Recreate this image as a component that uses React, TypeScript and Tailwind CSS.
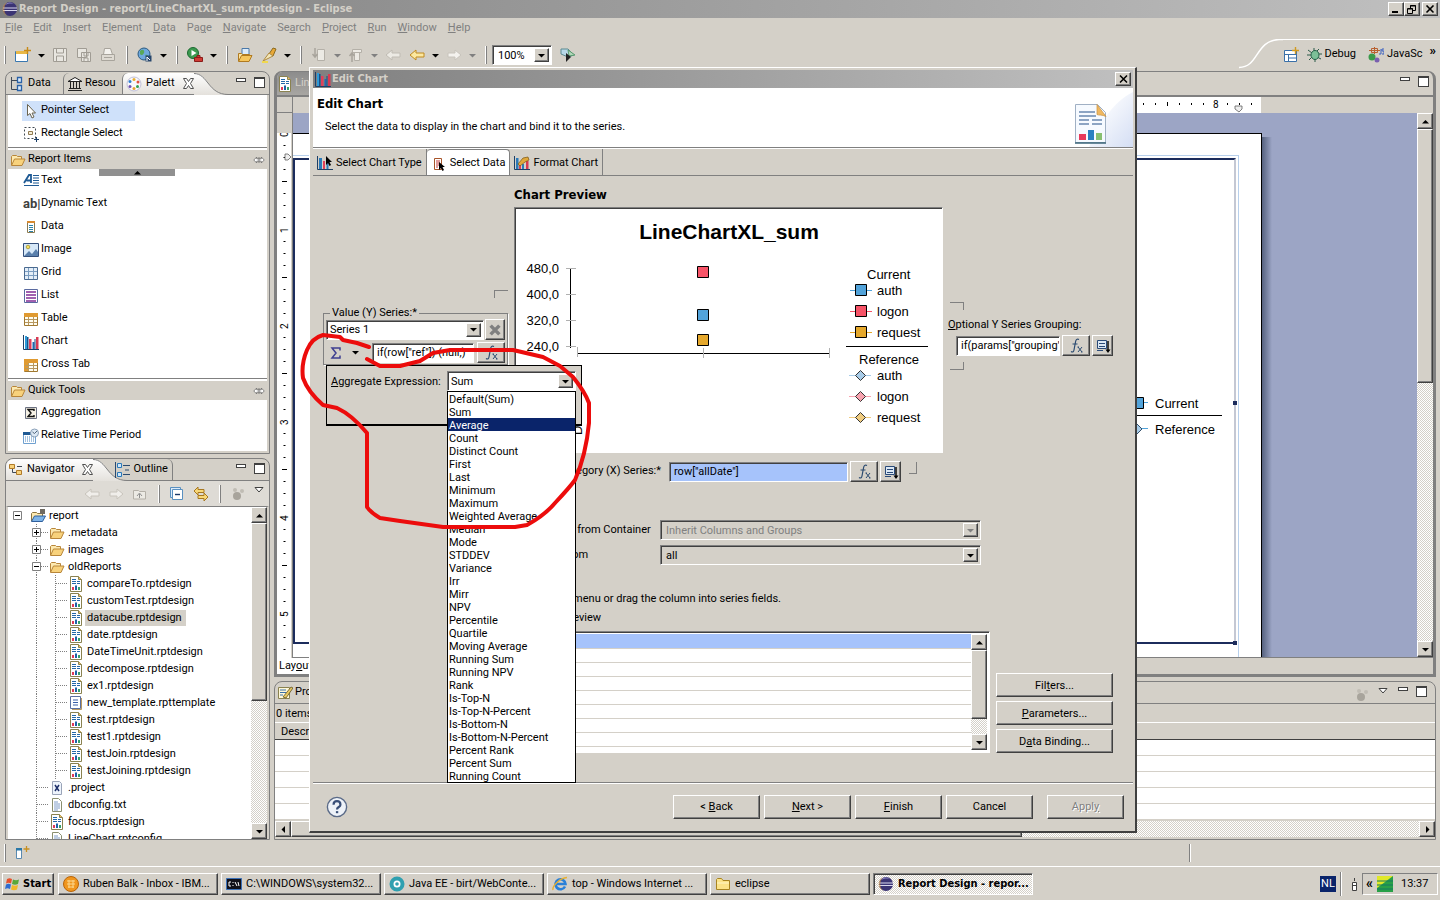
import { ReactNode, useState } from "react";
import clsx from "clsx";

const RAISED =
  "border border-t-white border-l-white border-r-[#404040] border-b-[#404040] shadow-[inset_-1px_-1px_0_#808080]";
const SUNKEN =
  "border border-t-[#808080] border-l-[#808080] border-r-white border-b-white shadow-[inset_1px_1px_0_#404040]";
const CHECKER =
  "bg-[repeating-conic-gradient(#ffffff_0_25%,#d4d0c8_0_50%)] bg-[length:2px_2px]";
const BOLD = "font-['DejaVu_Sans_Condensed','DejaVu_Sans',sans-serif] font-bold";

type IconProps = { children: ReactNode; size?: number; className?: string };

const Icon = ({ children, size = 16, className }: IconProps) => (
  <svg
    width={size}
    height={size}
    viewBox="0 0 16 16"
    fill="none"
    className={clsx("shrink-0", className)}
    aria-hidden="true"
  >
    {children}
  </svg>
);

const EclipseIcon = () => (
  <Icon>
    <circle cx="8" cy="8" r="7" fill="#3b3474" />
    <path d="M3 4a6 6 0 0 1 9-1c-4-1-7 0-9 1z" fill="#8f88c8" />
    <path d="M1 7h14M1 9.5h14" stroke="#d9d7ee" strokeWidth="1.2" />
    <path d="M5 1.5a7 7 0 0 0 0 13 9 9 0 0 1 0-13z" fill="#e0a040" opacity=".5" />
  </Icon>
);

const ChartIcon = () => (
  <Icon>
    <path d="M.5 1v14.500H16" stroke="#1d3f66" />
    <path d="M2 2h2v13H2z" fill="#2d9ad8" />
    <path d="M4 3h1.500v12H4z" fill="#1b4f86" />
    <path d="M6 5h2.500v10H6z" fill="#e0405a" />
    <path d="M9.500 8h2v7h-2z" fill="#1f6ab0" />
    <path d="M11.500 5h1v10h-1z" fill="#1b4f86" />
    <path d="M13 3h2.500v12H13z" fill="#d83a52" />
  </Icon>
);

const ChartTypeIcon = () => (
  <Icon>
    <path d="M.5 1v13.500H16" stroke="#1d3f66" />
    <path d="M2 3h3v11H2z" fill="#2d7ab8" />
    <path d="M6 6h2v8H6z" fill="#e0405a" />
    <path d="M9.500 8h2v6h-2z" fill="#2d7ab8" />
    <path d="M9 1v9l2-2 1.500 3 1.500-1-1.500-3H15z" fill="#000" />
  </Icon>
);

const DataCursorIcon = () => (
  <Icon>
    <path d="M3.500 2.500h7v11h-7z" fill="#fff" stroke="#a8552a" />
    <path d="M5 5h4M5 7h4M5 9h3M5 11h2" stroke="#c23b3b" />
    <path d="M8 6v8l2-2 1.500 3 1.500-1-1.500-3H14z" fill="#000" />
  </Icon>
);

const FormatChartIcon = () => (
  <Icon>
    <path d="M.5 1v13.500H16" stroke="#1d3f66" />
    <path d="M2 3h2.500v11H2z" fill="#2d7ab8" />
    <path d="M5 8h2v6H5z" fill="#e0405a" />
    <path d="M8 9h2v5H8z" fill="#2d7ab8" />
    <path d="M12 6h2.500v8H12z" fill="#d83a52" />
    <path d="M4 9l5-6 5-1 1 3-4 2-5 4z" fill="#e0a83c" stroke="#7a5410" strokeWidth=".7" />
  </Icon>
);

const ReportIcon = () => (
  <Icon>
    <path d="M2.500.5h8l3 3v12h-11z" fill="#fff" stroke="#8a8250" />
    <path d="M10.500.5v3h3" fill="#f0c060" stroke="#8a8250" />
    <path d="M4 3.500h4M4 5.500h4M9 5.500h3M4 7.500h4M9 7.500h3" stroke="#2468a8" />
    <path d="M4 11h2v3H4z" fill="#e03a5a" />
    <path d="M7 9.500h2V14H7z" fill="#1f62a8" />
    <path d="M10 11h2v3h-2z" fill="#35a06a" />
  </Icon>
);

const TemplateIcon = () => (
  <Icon>
    <path d="M2.500 1.500h10v12h-10z" fill="#fff" stroke="#5a6fa0" />
    <path d="M13.500 3v11.500H4" stroke="#b89860" />
    <path d="M5 5h5M5 7.500h5M5 10h5" stroke="#3a5fa8" />
  </Icon>
);

const TextFileIcon = () => (
  <Icon>
    <path d="M3.500 1.500h6l3 3v10h-9z" fill="#fff" stroke="#8a8f70" />
    <path d="M5 5h4M5 7h6M5 9h6M5 11h6M5 13h4" stroke="#7f9cc8" />
  </Icon>
);

const XFileIcon = () => (
  <Icon>
    <path d="M3.500 1.500h7l2 2v11h-9z" fill="#eef4fc" stroke="#9aa4b8" />
    <path d="M6 5l4 6M10 5l-4 6" stroke="#1d2f6a" strokeWidth="1.500" />
  </Icon>
);

const FolderIcon = () => (
  <Icon>
    <path d="M1.500 13V4.500l1-1h4l1 1h4V7" fill="#fde9b0" stroke="#b8863a" />
    <path d="M1.500 13.500l3-6.500h10.500l-3 6.500z" fill="#f8d27c" stroke="#b8863a" />
  </Icon>
);

const ProjectIcon = () => (
  <Icon>
    <path d="M1.500 13V5.500l1-1h4l1 1h5V8" fill="#fde9b0" stroke="#8a7440" />
    <path d="M1.500 13.500l3-5.500h11l-3 5.500z" fill="#7db4e8" stroke="#2f5f9c" />
    <path d="M10 1h5v5h-5z" fill="#6f6a60" />
  </Icon>
);

const PointerIcon = () => (
  <Icon>
    <path d="M4.500 1.500v11l2.500-2 2 4.500 2-1-2-4h3.500z" fill="#fff" stroke="#6a6450" />
  </Icon>
);

const MarqueeIcon = () => (
  <Icon>
    <path d="M1.500 1.500h11v11h-11z" stroke="#404850" strokeDasharray="2 2" />
    <path d="M5.500 5.500h4v3h-4z" fill="#f4eed8" stroke="#907a50" />
    <path d="M13.500 11v5M11 13.500h5" stroke="#1b3f6a" />
  </Icon>
);

const TextIcon = () => (
  <Icon>
    <path d="M1 10L6 2h2v8M3.500 7.500H8" stroke="#1f5a94" strokeWidth="1.800" />
    <path d="M10 2.500h6M10 5h6M10 7.500h6M10 10h6M1 12.500h15" stroke="#1f5a94" />
  </Icon>
);

const DataIcon = () => (
  <Icon>
    <path d="M4.500 2.500h7v11h-7z" fill="#fff" stroke="#8a7a50" />
    <path d="M4 2h8v2H4z" fill="#d88a30" />
    <path d="M6 6.500h4M6 8.500h4M6 10.500h4M6 12.500h4" stroke="#2a80a8" />
  </Icon>
);

const ImageIcon = () => (
  <Icon>
    <path d="M.5 1.500h15v13H.5z" fill="#d6e8f8" stroke="#34507c" />
    <circle cx="5" cy="5" r="1.800" fill="#f8e060" stroke="#9a8a20" strokeWidth=".7" />
    <path d="M1 14l5-5 3 3 4-5 2 3v4z" fill="#5a80ac" />
  </Icon>
);

const GridIcon = () => (
  <Icon>
    <path d="M1.500 2.500h13v12h-13z" fill="#e4eef8" stroke="#4a6a90" />
    <path d="M5.500 3v11M10.500 3v11M2 6.500h12M2 10.500h12" stroke="#7a9cc0" />
  </Icon>
);

const ListIcon = () => (
  <Icon>
    <path d="M1.500 1.500h13v13h-13z" fill="#fff" stroke="#5a6aa0" />
    <path d="M3 4h10M3 7h10M3 10h10M3 13h10" stroke="#a060b0" strokeWidth="2" />
  </Icon>
);

const TableIcon = ({ cross }: { cross?: boolean }) => (
  <Icon>
    <path d="M1.500 2.500h13v12h-13z" fill="#fffdf0" stroke="#a07830" />
    <path d="M1 2h14v4H1z" fill="#e09a30" />
    {cross && <path d="M1 2h4v12H1z" fill="#e09a30" />}
    <path d="M5.500 6v8M10.500 6v8M2 8.500h12M2 11.500h12" stroke="#b89860" />
  </Icon>
);

const SigmaIcon = () => (
  <Icon>
    <path d="M2.500 2.500h11v11h-11z" fill="#f6f2e6" stroke="#6a7080" />
    <path d="M11 6V4.500H5L8 8l-3 3.500h6V10" stroke="#111" strokeWidth="1.400" />
  </Icon>
);

const TimeIcon = () => (
  <Icon>
    <path d="M.5 4.500h12v11H.5z" fill="#fff" stroke="#6fa0d0" />
    <path d="M0 4h10v3H0z" fill="#1f5a94" />
    <path d="M2 9h10M2 11h10M2 13h10" stroke="#4a86c0" strokeDasharray="1 1" />
    <circle cx="11.500" cy="5" r="4" fill="#dce8f4" stroke="#8aa0b8" />
    <path d="M9.500 4l2 1.500L14 3" stroke="#50657a" />
  </Icon>
);

const DataTreeIcon = () => (
  <Icon>
    <path d="M3.500 1v12.500H9M3.500 4.500H9" stroke="#404a58" />
    <path d="M9.500 1.500h4v5h-4zM9.500 9.500h4v5h-4z" fill="#dcebfa" stroke="#2a62a8" strokeWidth="1.300" />
  </Icon>
);

const NavigatorIcon = () => (
  <Icon>
    <path d="M.5 2.500h5v4h-5zM7.500 8.500h5v4h-5z" fill="#f8d27c" stroke="#b07a28" />
    <path d="M3.500 7v3.500H7M8 4.500h5" stroke="#404a58" />
  </Icon>
);

const OutlineIcon = () => (
  <Icon>
    <path d="M2.500 1.500h4v4h-4zM2.500 10.500h4v4h-4z" fill="#cfe6fa" stroke="#2a78b8" />
    <path d="M.5 0v16M8 3.500h7M8 12.500h7M10 8h4" stroke="#2a4a70" />
  </Icon>
);

const LibraryIcon = () => (
  <Icon>
    <path d="M1 5.500L8 1.500l7 4zM1 14.500h14M2 12.500h12" stroke="#222" fill="#fff" />
    <path d="M3.500 6v6M6.500 6v6M9.500 6v6M12.500 6v6" stroke="#222" />
  </Icon>
);

const PaletteIcon = () => (
  <Icon>
    <circle cx="8" cy="8" r="7" fill="#f8f8fc" stroke="#c0c0d8" />
    <circle cx="8" cy="3.500" r="1.500" fill="#e8b030" />
    <circle cx="12" cy="6" r="1.500" fill="#e05040" />
    <circle cx="11.500" cy="10.500" r="1.500" fill="#30a050" />
    <circle cx="8" cy="12.500" r="1.500" fill="#e8a030" />
    <circle cx="4" cy="10.500" r="1.500" fill="#7050b0" />
    <circle cx="4" cy="5.500" r="1.500" fill="#3080d0" />
  </Icon>
);

const CloseTabIcon = () => (
  <svg width="11" height="11" viewBox="0 0 11 11" aria-hidden="true">
    <path
      d="M.5.5h3l2 3 2-3h3l-3 5 3 5h-3l-2-3-2 3h-3l3-5z"
      fill="#fff"
      stroke="#505050"
    />
  </svg>
);

const FocusIcon = () => (
  <Icon>
    <circle cx="7" cy="10" r="4" fill="#a8a49c" />
    <circle cx="5" cy="4" r="2" fill="#c0bcb4" />
    <circle cx="12" cy="5" r="2" fill="#c0bcb4" />
  </Icon>
);

const ViewMenuIcon = () => (
  <svg width="10" height="6" viewBox="0 0 10 6" aria-hidden="true">
    <path d="M1 .5h8L5 5z" fill="#fff" stroke="#404040" />
  </svg>
);

const Triangle = ({ dir = "down", muted }: { dir?: "up" | "down" | "left" | "right"; muted?: boolean }) => {
  const paths = {
    down: "M0 2h7L3.500 5.500z",
    up: "M0 5.500h7L3.500 2z",
    left: "M5 0v7L1.500 3.500z",
    right: "M2 0v7l3.500-3.500z",
  };
  return (
    <svg width="7" height="7" viewBox="0 0 7 7" className="shrink-0" aria-hidden="true">
      <path d={paths[dir]} fill={muted ? "#808080" : "#000"} />
    </svg>
  );
};

const FxGlyph = () => (
  <Icon>
    <path
      d="M11 1.500c-2-1-3 0-3.400 2L6 12c-.4 2-1.500 2.500-3 1.500M4.500 6h5"
      stroke="#2a4a70"
      strokeWidth="1.200"
    />
    <path d="M10 9l4 5M14 9l-4 5M9.500 9h1.500M13 14h1.500" stroke="#2a4a70" />
  </Icon>
);

const GroupGlyph = () => (
  <Icon>
    <path d="M2.500 2.500h9v8h-9z" fill="#dce8f4" stroke="#2a4a78" />
    <path d="M4 5.500h6M4 8.500h6M2 12.500h6" stroke="#2a4a78" />
    <path d="M13 3v9" stroke="#000" strokeWidth="1.400" />
    <path d="M10.500 11.500h5L13 15z" fill="#000" />
  </Icon>
);

const WindowMinMax = () => (
  <div className="ml-auto flex gap-2 pr-1 pt-1">
    <button type="button" aria-label="Minimize view" className="mt-px h-[4px] w-[10px] border border-[#404040] bg-white" />
    <button type="button" aria-label="Maximize view" className="h-[11px] w-[11px] border border-t-2 border-[#404040] bg-white" />
  </div>
);

type ScrollProps = { className?: string; thumb: string };

const VScroll = ({ className, thumb }: ScrollProps) => (
  <div className={clsx("flex w-4 shrink-0 flex-col", CHECKER, className)}>
    <button type="button" aria-label="Scroll up" className={clsx("grid h-4 shrink-0 place-items-center bg-[#d4d0c8]", RAISED)}>
      <Triangle dir="up" />
    </button>
    <div className={clsx("bg-[#d4d0c8]", RAISED, thumb)} />
    <button type="button" aria-label="Scroll down" className={clsx("mt-auto grid h-4 shrink-0 place-items-center bg-[#d4d0c8]", RAISED)}>
      <Triangle />
    </button>
  </div>
);

/* ---------- top of the workbench ---------- */

const TitleBar = () => (
  <header className="flex h-[18px] shrink-0 items-center gap-px bg-linear-to-r from-[#808080] to-[#c0c0c0] px-0.5">
    <EclipseIcon />
    <h1 className={clsx("text-[11px] text-[#d4d0c8]", BOLD)}>
      Report Design - report/LineChartXL_sum.rptdesign - Eclipse
    </h1>
    <div className="ml-auto flex">
      {["Minimize", "Restore", "Close"].map((name) => (
        <button
          key={name}
          type="button"
          aria-label={name}
          className={clsx("grid h-[14px] w-4 place-items-center bg-[#d4d0c8]", RAISED, name === "Close" && "ml-0.5")}
        >
          <svg width="10" height="9" viewBox="0 0 10 9" fill="none" stroke="#000" aria-hidden="true">
            {name === "Minimize" && <path d="M1 7h6" strokeWidth="2" />}
            {name === "Restore" && <path d="M3.500 3V.5h5v5H6M3 1h6M.5 3.500h5v5h-5zM1 4h5" />}
            {name === "Close" && <path d="M1.500.5l7 7M8.500.5l-7 7" strokeWidth="1.600" />}
          </svg>
        </button>
      ))}
    </div>
  </header>
);

const menus: [string, string, string][] = [
  ["", "F", "ile"],
  ["", "E", "dit"],
  ["", "I", "nsert"],
  ["E", "l", "ement"],
  ["", "D", "ata"],
  ["Pa", "g", "e"],
  ["", "N", "avigate"],
  ["Se", "a", "rch"],
  ["", "P", "roject"],
  ["", "R", "un"],
  ["", "W", "indow"],
  ["", "H", "elp"],
];

const MenuBar = () => (
  <nav className="flex h-[21px] shrink-0 items-center gap-[11px] pl-[5px] text-[#808080]">
    {menus.map(([before, key, after]) => (
      <button key={before + key + after} type="button" className="text-[11px]">
        {before}
        <u className="underline">{key}</u>
        {after}
      </button>
    ))}
  </nav>
);

const Separator = () => (
  <span className="grid w-[13px] shrink-0 place-items-center">
    <span className="h-[18px] w-0.5 border-l border-r border-l-white border-r-[#808080]" />
  </span>
);

const ToolButton = ({ label, children }: { label: string; children: ReactNode }) => (
  <button type="button" aria-label={label} className="grid h-6 w-6 shrink-0 place-items-center">
    {children}
  </button>
);

const ToolArrow = ({ muted }: { muted?: boolean }) => (
  <button type="button" aria-label="More" className="grid h-6 w-[13px] shrink-0 place-items-center">
    <Triangle muted={muted} />
  </button>
);

const Arrow = ({ left, fill, stroke }: { left?: boolean; fill: string; stroke: string }) => (
  <Icon>
    <path
      d={left ? "M1 8l6-5v3h8v4H7v3z" : "M15 8L9 3v3H2v4h7v3z"}
      fill={fill}
      stroke={stroke}
      strokeLinejoin="round"
    />
  </Icon>
);

type ComboProps = { id: string; label?: string; value: string; disabled?: boolean; className?: string; children?: ReactNode };

const Combo = ({ id, label, value, disabled, className, children }: ComboProps) => (
  <div className={clsx("relative h-5 p-0.5", SUNKEN, className)}>
    <select
      id={id}
      aria-label={label}
      disabled={disabled}
      className={clsx("block h-full w-full appearance-none bg-transparent pl-px text-[11px] leading-none", disabled && "text-[#808080]")}
    >
      <option>{value}</option>
    </select>
    <span className={clsx("pointer-events-none absolute inset-y-0.5 right-0.5 grid w-[15px] place-items-center bg-[#d4d0c8]", RAISED)}>
      <Triangle muted={disabled} />
    </span>
    {children}
  </div>
);

const MainToolbar = () => (
  <div className="flex items-center">
    <span className="-ml-0.5 flex">
      <Separator />
    </span>
    <ToolButton label="New">
      <Icon>
        <path d="M.5 4.500h12v10H.5z" fill="#fff" stroke="#3a78b0" />
        <path d="M1 4h12v3H1z" fill="#e8b848" />
        <path d="M12.500 0v7M9 3.500h7" stroke="#c88a18" strokeWidth="1.400" />
      </Icon>
    </ToolButton>
    <ToolArrow />
    <ToolButton label="Save">
      <Icon>
        <path d="M1.500 1.500h13v13h-13z" fill="#e8e6e0" stroke="#a09c94" />
        <path d="M4.500 2v4h7V2M4.500 14V9h7v5" stroke="#a09c94" />
      </Icon>
    </ToolButton>
    <ToolButton label="Save All">
      <Icon>
        <path d="M1.500 1.500h9v9h-9zM5.500 5.500h9v9h-9z" fill="#e8e6e0" stroke="#a09c94" />
        <path d="M8 6v3h4V6M8 14v-3h4v3" stroke="#a09c94" />
      </Icon>
    </ToolButton>
    <ToolButton label="Print">
      <Icon>
        <path d="M4.500 1.500h6l2 6h-9z" fill="#f4f2ee" stroke="#a8a49c" />
        <path d="M1.500 7.500h13v6h-13zM4 10.500h8" fill="#dedad2" stroke="#a8a49c" />
      </Icon>
    </ToolButton>
    <Separator />
    <ToolButton label="View Report">
      <Icon>
        <circle cx="7" cy="7" r="6" fill="#6fa8dc" stroke="#2a5a80" />
        <path d="M3 4c3-3 5 0 4 2s-3 3-4 1zM8 8c2-1 4 0 3 3z" fill="#58a858" />
        <path d="M8.500 8.500h6v6h-6z" fill="#27466c" />
        <path d="M10 14v-4l3 3" stroke="#fff" />
      </Icon>
    </ToolButton>
    <ToolArrow />
    <Separator />
    <ToolButton label="Run">
      <Icon>
        <circle cx="6" cy="6" r="5.500" fill="#3c9a50" stroke="#1c6a30" />
        <path d="M4.500 3l5 3-5 3z" fill="#fff" />
        <path d="M7.500 10.500h8v4h-8zM10 10V8.500h3V10" fill="#d03a34" stroke="#8a1c18" />
      </Icon>
    </ToolButton>
    <ToolArrow />
    <Separator />
    <ToolButton label="Open">
      <Icon>
        <path d="M5 1.500h7v6H5z" fill="#dcecfb" stroke="#4a78a8" />
        <path d="M1.500 14V6.500h3l1 1h7v2" fill="#fbe3a0" stroke="#b07a20" />
        <path d="M1.500 14.500l3-6h10.500l-3 6z" fill="#f6c65c" stroke="#b07a20" />
      </Icon>
    </ToolButton>
    <ToolButton label="Highlight">
      <Icon>
        <path d="M8 7l4-6 3 1-3 7z" fill="#e8a838" stroke="#8a6a20" />
        <path d="M2 14l6-8 4 3z" fill="#f2e6b8" stroke="#b08a40" />
        <path d="M1 15h6" stroke="#f0d850" strokeWidth="2" />
      </Icon>
    </ToolButton>
    <ToolArrow />
    <Separator />
    <ToolButton label="Next Annotation">
      <Icon>
        <path d="M6.500 2.500h7v11h-7z" fill="#eceae4" stroke="#b4b0a8" />
        <path d="M4 1v8M1.500 7L4 10l2.500-3" stroke="#a8a49c" strokeWidth="1.500" />
      </Icon>
    </ToolButton>
    <ToolArrow muted />
    <ToolButton label="Previous Annotation">
      <Icon>
        <path d="M4.500 2.500h9v3h-9zM6.500 5.500h5v8h-5z" fill="#eceae4" stroke="#b4b0a8" />
        <path d="M4 15V7M1.500 9L4 6l2.500 3" stroke="#a8a49c" strokeWidth="1.500" />
      </Icon>
    </ToolButton>
    <ToolArrow muted />
    <ToolButton label="Last Edit">
      <Arrow left fill="#eceae4" stroke="#c0bcb4" />
    </ToolButton>
    <ToolButton label="Back">
      <Arrow left fill="#fce8a0" stroke="#c08a20" />
    </ToolButton>
    <ToolArrow />
    <ToolButton label="Forward">
      <Arrow fill="#f4f2ee" stroke="#c8c4bc" />
    </ToolButton>
    <ToolArrow muted />
    <Separator />
    <Combo id="zoom" label="Zoom" value="100%" className="w-[60px] bg-white pl-1" />
    <ToolButton label="Preview">
      <Icon className="ml-2">
        <path d="M1 2h7l6 6-6 2-7-3z" fill="#b8d8e8" stroke="#5a8a90" />
        <path d="M8 3l7 5-6 1z" fill="#b0d8b8" stroke="#5a9a70" />
        <path d="M6 6l5 4-5 5z" fill="#222" />
      </Icon>
    </ToolButton>
  </div>
);

const Perspectives = () => (
  <div className="ml-auto flex h-[30px]">
    <svg width="44" height="30" viewBox="0 0 44 30" fill="none" aria-hidden="true">
      <path d="M0 28.500c20 0 16-27 40-28h4" stroke="#fff" strokeWidth="1.500" />
    </svg>
    <div className="flex items-center gap-2 border-t border-white pr-1 text-[11px]">
      <button type="button" aria-label="Open Perspective">
        <Icon>
          <path d="M1.500 3.500h12v11h-12zM1.500 7.500h12M5.500 7.500v7M5.500 11h8" fill="#fff" stroke="#3a70a8" />
          <path d="M12.500 0v7M9 3.500h7" stroke="#d09a20" strokeWidth="1.400" />
        </Icon>
      </button>
      <button type="button" className="flex items-center gap-0.5">
        <Icon>
          <path d="M1 3l4 3M0 8h4M2 13l3-3M7 1v3M12 2L9 5M15 7h-4M14 12l-4-2M8 15v-3" stroke="#2a5a48" />
          <ellipse cx="8" cy="8" rx="4" ry="4.500" fill="#7cc098" stroke="#246048" />
        </Icon>
        Debug
      </button>
      <button type="button" className="ml-1 flex items-center gap-[3px]">
        <Icon>
          <path d="M3.500 1.500h6v4h-6zM1 3.500h11M6.500 0v7" stroke="#b86030" />
          <circle cx="4" cy="10" r="3.500" fill="#3a9a4a" />
          <circle cx="9" cy="13" r="2.500" fill="#7a60b0" />
          <path d="M13 2v5h-2M16 2h-2v2h2v3h-2" stroke="#3a60c0" />
        </Icon>
        JavaSc
      </button>
      <button type="button" aria-label="More perspectives" className="-ml-px pb-2 text-[13px] font-bold">
        »
      </button>
    </div>
  </div>
);

/* ---------- left column ---------- */

const TabCurve = () => (
  <svg width="34" height="22" viewBox="0 0 34 22" aria-hidden="true" className="shrink-0">
    <defs>
      <linearGradient id="tab-fade" x1="0" y1="0" x2="0" y2="1">
        <stop offset="0" stopColor="#ffffff" />
        <stop offset="1" stopColor="#e4e1dc" />
      </linearGradient>
    </defs>
    <path d="M0 0C14 0 14 21 34 21.500V22H0z" fill="url(#tab-fade)" />
    <path d="M0 .5C14 .5 14 21.500 34 21.500" fill="none" stroke="#808080" />
  </svg>
);

const reportItems: [string, ReactNode][] = [
  ["Text", <TextIcon />],
  ["Dynamic Text", <span className="text-[13px] font-bold text-[#404040]">ab|</span>],
  ["Data", <DataIcon />],
  ["Image", <ImageIcon />],
  ["Grid", <GridIcon />],
  ["List", <ListIcon />],
  ["Table", <TableIcon />],
  ["Chart", <ChartIcon />],
  ["Cross Tab", <TableIcon cross />],
];

const Drawer = ({ title, children }: { title: string; children: ReactNode }) => (
  <section className="border-t border-[#808080] pt-0.5">
    <h2 className="flex h-[19px] items-center gap-0.5 bg-[#d4d0c8] px-0.5 text-[11px]">
      <FolderIcon />
      {title}
      <Icon size={12} className="ml-auto">
        <path d="M1 8l4-4v2.500h6V4l4 4-4 4V9.500H5V12zM8 4v8" fill="#fff" stroke="#606060" />
      </Icon>
    </h2>
    {children}
  </section>
);

const PaletteItem = ({ label, icon, active }: { label: string; icon: ReactNode; active?: boolean }) => (
  <li className="flex h-[23px] items-center pl-[14px]">
    <button
      type="button"
      className={clsx(
        "flex h-5 min-w-[113px] items-center gap-0.5 pl-px text-left text-[11px] whitespace-nowrap",
        active && "bg-[#cfe1fa]",
      )}
    >
      <span className="grid w-4 shrink-0 place-items-center">{icon}</span>
      {label}
    </button>
  </li>
);

const PaletteView = () => (
  <section className="flex h-[383px] shrink-0 flex-col rounded-t-lg border border-[#808080]">
    <div className="flex h-[23px] shrink-0 border-b border-[#808080] pt-px text-[11px]">
      <button type="button" className="flex w-[57px] items-center gap-1 pl-0.5">
        <DataTreeIcon />
        Data
      </button>
      <button type="button" className="flex w-[59px] items-center gap-0.5 rounded-tl-md border-l border-[#808080] pl-[3px]">
        <LibraryIcon />
        Resou
      </button>
      <button type="button" className="flex items-center gap-1 rounded-tl-md border-l border-[#808080] bg-linear-to-b from-white to-[#e4e1dc] pl-[3px]">
        <PaletteIcon />
        Palett
        <span className="ml-1">
          <CloseTabIcon />
        </span>
      </button>
      <TabCurve />
      <WindowMinMax />
    </div>
    <div className="flex-1 overflow-hidden border-2 border-t-0 border-[#d4d0c8] bg-white pt-1">
      <ul className="pb-0.5">
        <PaletteItem label="Pointer Select" icon={<PointerIcon />} active />
        <PaletteItem label="Rectangle Select" icon={<MarqueeIcon />} />
      </ul>
      <Drawer title="Report Items">
        <ul className="relative pb-0.5">
          {reportItems.map(([label, icon]) => (
            <PaletteItem key={label} label={label} icon={icon} />
          ))}
          <li className="absolute left-[91px] top-0 grid h-[7px] w-[76px] place-items-center bg-[#909090]">
            <Triangle dir="up" />
          </li>
        </ul>
      </Drawer>
      <Drawer title="Quick Tools">
        <ul className="pt-px">
          <PaletteItem label="Aggregation" icon={<SigmaIcon />} />
          <PaletteItem label="Relative Time Period" icon={<TimeIcon />} />
        </ul>
      </Drawer>
    </div>
  </section>
);

type Node = { name: string; depth: number; icon: ReactNode; toggle?: "+" | "-"; selected?: boolean };

const rpt = (name: string, depth = 2, selected = false): Node => ({ name, depth, icon: <ReportIcon />, selected });

const nodes: Node[] = [
  { name: "report", depth: 0, icon: <ProjectIcon />, toggle: "-" },
  { name: ".metadata", depth: 1, icon: <FolderIcon />, toggle: "+" },
  { name: "images", depth: 1, icon: <FolderIcon />, toggle: "+" },
  { name: "oldReports", depth: 1, icon: <FolderIcon />, toggle: "-" },
  rpt("compareTo.rptdesign"),
  rpt("customTest.rptdesign"),
  rpt("datacube.rptdesign", 2, true),
  rpt("date.rptdesign"),
  rpt("DateTimeUnit.rptdesign"),
  rpt("decompose.rptdesign"),
  rpt("ex1.rptdesign"),
  { name: "new_template.rpttemplate", depth: 2, icon: <TemplateIcon /> },
  rpt("test.rptdesign"),
  rpt("test1.rptdesign"),
  rpt("testJoin.rptdesign"),
  rpt("testJoining.rptdesign"),
  { name: ".project", depth: 1, icon: <XFileIcon /> },
  { name: "dbconfig.txt", depth: 1, icon: <TextFileIcon /> },
  rpt("focus.rptdesign", 1),
  { name: "LineChart.rptconfig", depth: 1, icon: <TextFileIcon /> },
];

const TreeRow = ({ node }: { node: Node }) => (
  <li className="flex h-[17px] items-center text-[11px] whitespace-nowrap">
    {node.depth > 0 && <span className="w-[19px] shrink-0" />}
    {node.depth > 1 && (
      <span className="flex h-full w-[19px] shrink-0 justify-center">
        <span className="h-full border-l border-dotted border-[#808080]" />
      </span>
    )}
    <span className="relative flex h-full w-[22px] shrink-0 items-center pl-[5px]">
      {node.depth > 0 && (
        <>
          <span className="absolute inset-y-0 left-[9px] border-l border-dotted border-[#808080]" />
          <span className="absolute left-[9px] top-2 w-3 border-t border-dotted border-[#808080]" />
        </>
      )}
      {node.toggle && (
        <button type="button" aria-label={node.toggle === "+" ? "Expand" : "Collapse"} className="relative">
          <svg width="9" height="9" viewBox="0 0 9 9" className="block" aria-hidden="true">
            <path d="M.5.5h8v8h-8z" fill="#fff" stroke="#808080" />
            <path d={node.toggle === "+" ? "M2 4.500h5M4.500 2v5" : "M2 4.500h5"} stroke="#000" />
          </svg>
        </button>
      )}
    </span>
    {node.icon}
    <span className={clsx("ml-px px-0.5 leading-[16px]", node.selected && "bg-[#d4d0c8] pr-1")}>
      {node.name}
    </span>
  </li>
);

const NavigatorView = () => (
  <section className="mt-1 flex min-h-0 flex-1 flex-col rounded-t-lg border border-[#808080]">
    <div className="flex h-[22px] shrink-0 border-b border-[#808080] text-[11px]">
      <button type="button" className="flex items-center gap-0.5 rounded-tl-lg bg-linear-to-b from-white to-[#e4e1dc] pl-[3px]">
        <NavigatorIcon />
        Navigator
        <span className="ml-1.5">
          <CloseTabIcon />
        </span>
      </button>
      <div className="-mr-3">
        <TabCurve />
      </div>
      <button type="button" className="flex items-center gap-0.5 rounded-tr-md border-r border-[#808080] pr-1">
        <OutlineIcon />
        Outline
      </button>
      <WindowMinMax />
    </div>
    <div className="flex h-[25px] shrink-0 items-center justify-end bg-[#dedbd5] pr-px">
      <ToolButton label="Go back">
        <Arrow left fill="#f0eeea" stroke="#c8c4bc" />
      </ToolButton>
      <ToolButton label="Go forward">
        <Arrow fill="#f0eeea" stroke="#c8c4bc" />
      </ToolButton>
      <ToolButton label="Up">
        <Icon>
          <path d="M1.500 13V4.500h5l1 1h6V13z" fill="#eceae4" stroke="#b4b0a8" />
          <path d="M7.500 12V8M5 10l2.500-3L10 10" stroke="#909090" />
        </Icon>
      </ToolButton>
      <Separator />
      <ToolButton label="Collapse All">
        <Icon>
          <path d="M1.500 1.500h10v10h-10z" fill="#dcebfa" stroke="#5a90c0" />
          <path d="M3.500 3.500h10v10h-10z" fill="#fff" stroke="#5a90c0" />
          <path d="M6 8.500h5" stroke="#1a3a6a" strokeWidth="1.400" />
        </Icon>
      </ToolButton>
      <ToolButton label="Link with Editor">
        <Icon>
          <path d="M1 5l4-4v2.500h6v3H5V9z" fill="#f8d878" stroke="#a87820" />
          <path d="M15 11l-4-4v2.500H5v3h6V15z" fill="#f8d878" stroke="#a87820" />
        </Icon>
      </ToolButton>
      <Separator />
      <ToolButton label="Focus">
        <FocusIcon />
      </ToolButton>
      <button type="button" aria-label="View Menu" className="mx-1 mb-2">
        <ViewMenuIcon />
      </button>
    </div>
    <div className="flex min-h-0 flex-1 border-x-2 border-t border-x-[#d4d0c8] border-t-[#808080] bg-white">
      <ul className="min-h-0 flex-1 overflow-hidden">
        {nodes.map((n) => (
          <TreeRow key={n.name} node={n} />
        ))}
      </ul>
      <VScroll thumb="h-[178px]" />
    </div>
  </section>
);

/* ---------- editor and problems ---------- */

const VerticalRuler = () => (
  <svg width="14" height="544" viewBox="0 0 14 544" className="mt-5 shrink-0 bg-white" aria-hidden="true">
    {Array.from({ length: 44 }, (_, i) => (
      <path
        key={i}
        d={i % 8 === 4 ? "M5 0h5" : "M6.500 0h2"}
        transform={`translate(0 ${i * 12 + 0.5})`}
        stroke="#000"
        className={i % 8 === 0 ? "hidden" : undefined}
      />
    ))}
    {[0, 1, 2, 3, 4, 5].map((n) => (
      <text
        key={n}
        transform={`translate(11 ${n * 96 + 4}) rotate(-90)`}
        className="fill-black text-[10px]"
      >
        {n}
      </text>
    ))}
    <path d="M8 21h3l3 3-3 3H8z" fill="#eee" stroke="#606060" strokeWidth=".8" />
  </svg>
);

const HorizontalRuler = () => (
  <svg width="125" height="16" viewBox="0 0 125 16" className="bg-white" aria-hidden="true">
    {Array.from({ length: 10 }, (_, i) => (
      <path
        key={i}
        d={i === 2 ? "M0 5v4" : "M0 6v2"}
        transform={`translate(${i * 12 + 7.5} 0)`}
        stroke="#000"
        className={i === 6 ? "hidden" : undefined}
      />
    ))}
    <text x="77" y="11" className="fill-black text-[10px]">
      8
    </text>
    <path d="M99 9h7v3l-3 3-4-3z" fill="#eee" stroke="#606060" strokeWidth=".8" />
  </svg>
);

const Editor = () => (
  <section className="flex min-h-0 flex-1 flex-col overflow-hidden rounded-t-lg border-b-[3px] border-l-[3px] border-r-[3px] border-t border-[#808080]">
    <div className="flex h-[23px] shrink-0">
      <div className="flex w-28 items-center gap-0.5 bg-linear-to-b from-[#8c8c8c] to-[#a8a6a2] text-[11px] text-[#d4d0c8]">
        <ReportIcon />
        LineChartXL_sum
      </div>
      <WindowMinMax />
    </div>
    <div className="h-[2px] shrink-0 bg-[#808080]" />
    <div className="flex min-h-0 flex-1">
      <div className="flex w-4 shrink-0 flex-col overflow-hidden border-r border-[#808080]">
        <div className="h-4 shrink-0 border-b border-[#808080]" />
        <VerticalRuler />
      </div>
      <div className="flex min-w-0 flex-1 flex-col">
        <div className="flex h-4 shrink-0 justify-end pr-[172px]">
          <HorizontalRuler />
        </div>
        <div className="flex min-h-0 flex-1 border-b border-[#808080]">
          <div className="flex flex-1 bg-[#9ca5c5] pr-[145px] pt-5">
            <div className="flex flex-1 border-r border-t border-black bg-white pr-[22px] pt-[21px]">
              <div className="flex-1 border-r border-t border-[#b8d0ec] pb-[13px] pr-0.5 pt-0.5">
                <div className="relative flex h-full items-center justify-end border-2 border-[#1c2c5c] border-r-[#c4c8d4]">
                  <svg width="110" height="60" viewBox="0 0 110 60" className="mt-9 font-['Liberation_Sans',Arial,sans-serif] text-[13px]">
                    <path d="M0 13.500h24M0 39.500h24" stroke="#52a3da" />
                    <path d="M8.500 8.500h11v11h-11z" fill="#52a3da" stroke="#000" />
                    <path d="M12 34l6 6-6 6-6-6z" fill="#a8cce8" stroke="#34506c" />
                    <path d="M0 26.500h98" stroke="#000" />
                    <text x="31" y="19">Current</text>
                    <text x="31" y="45">Reference</text>
                  </svg>
                  <span className="absolute -right-[3px] top-1/2 h-1 w-1 bg-[#1c2c5c]" />
                  <span className="absolute -bottom-[3px] -right-[3px] h-1 w-1 bg-[#1c2c5c]" />
                </div>
              </div>
            </div>
            <div className="mt-1 w-[10px] bg-linear-to-r from-[#56627f] to-[#9ca5c5]" />
          </div>
          <VScroll thumb="h-[254px]" />
        </div>
      </div>
    </div>
    <div className="flex h-4 shrink-0 text-[11px]">
      <button type="button" className="flex w-16 items-center bg-white pl-0.5">
        Lay<u>o</u>ut
      </button>
    </div>
  </section>
);

const Problems = () => (
  <section className="mt-1 flex h-[159px] shrink-0 flex-col rounded-t-lg border border-[#808080]">
    <div className="flex h-[22px] shrink-0 items-center gap-0.5 border-b border-[#808080] pl-0.5 text-[11px]">
      <Icon>
        <path d="M1.500 2.500h11v11h-11z" fill="#fff8d8" stroke="#8a8250" />
        <path d="M3 5h6M3 7.500h6M3 10h3" stroke="#3a70a8" />
        <path d="M6 12l8-10 2 1-7 10z" fill="#e8c860" stroke="#605020" strokeWidth=".8" />
      </Icon>
      Problems
      <span className="ml-auto flex items-center gap-2 pt-1">
        <FocusIcon />
        <span className="mb-2">
          <ViewMenuIcon />
        </span>
      </span>
      <div className="ml-2 flex h-full pr-1">
        <WindowMinMax />
      </div>
    </div>
    <p className="h-[18px] shrink-0 pl-px text-[11px] leading-[19px]">0 items</p>
    <table className="w-full border-collapse bg-white text-left text-[11px]">
      <thead>
        <tr className="h-[17px] border-b border-t border-b-[#404040] border-t-white bg-[#d4d0c8]">
          <th className="pl-1.5 font-normal leading-none">Description</th>
        </tr>
      </thead>
      <tbody>
        {[0, 1, 2, 3, 4].map((r) => (
          <tr key={r} className="h-4 border-b border-[#d4d0c8]">
            <td />
          </tr>
        ))}
      </tbody>
    </table>
    <div className={clsx("mb-0.5 mt-auto flex h-4 shrink-0", CHECKER)}>
      <button type="button" aria-label="Scroll left" className={clsx("grid w-4 place-items-center bg-[#d4d0c8]", RAISED)}>
        <Triangle dir="left" />
      </button>
      <div className={clsx("w-[63%] bg-[#d4d0c8]", RAISED)} />
      <button type="button" aria-label="Scroll right" className={clsx("ml-auto grid w-4 place-items-center bg-[#d4d0c8]", RAISED)}>
        <Triangle dir="right" />
      </button>
    </div>
  </section>
);

/* ---------- chart dialog ---------- */

const Field = ({ id, label, value, className }: { id: string; label?: string; value: string; className: string }) => (
  <input
    id={id}
    aria-label={label}
    defaultValue={value}
    className={clsx("h-5 min-w-0 pl-1 text-[11px] outline-none", SUNKEN, className)}
  />
);

const FxButton = ({ className }: { className?: string }) => (
  <button type="button" aria-label="Edit expression" className={clsx("grid h-[21px] w-7 shrink-0 place-items-center bg-[#d4d0c8]", RAISED, className)}>
    <FxGlyph />
  </button>
);

const GroupButton = () => (
  <button type="button" aria-label="Edit grouping" className={clsx("grid h-[21px] w-[21px] shrink-0 place-items-center bg-[#d4d0c8]", RAISED)}>
    <GroupGlyph />
  </button>
);

const functions = [
  "Default(Sum)", "Sum", "Average", "Count", "Distinct Count", "First", "Last",
  "Minimum", "Maximum", "Weighted Average", "Median", "Mode", "STDDEV", "Variance",
  "Irr", "Mirr", "NPV", "Percentile", "Quartile", "Moving Average", "Running Sum",
  "Running NPV", "Rank", "Is-Top-N", "Is-Top-N-Percent", "Is-Bottom-N",
  "Is-Bottom-N-Percent", "Percent Rank", "Percent Sum", "Running Count",
];

const AggregatePopup = () => {
  const [active, setActive] = useState("Average");
  return (
    <div className="absolute left-[3px] top-full z-20 flex h-[61px] w-[256px] items-start border border-b-2 border-black bg-[#d4d0c8] pl-1 pt-[5px]">
      <label htmlFor="aggregate" className="w-[116px] text-[11px] leading-[21px] whitespace-nowrap">
        <u>A</u>ggregate Expression:
      </label>
      <Combo id="aggregate" value="Sum" className="w-[129px] bg-white">
        <ul role="listbox" aria-label="Aggregate functions" className="absolute -left-px top-[19px] w-[129px] border border-black bg-white">
          {functions.map((f) => (
            <li
              key={f}
              role="option"
              aria-selected={f === active}
              onMouseEnter={() => setActive(f)}
              className={clsx("h-[13px] pl-px text-[11px] leading-[15px]", f === active && "bg-[#0a246a] text-white")}
            >
              {f}
            </li>
          ))}
        </ul>
      </Combo>
    </div>
  );
};

const series = [
  { name: "auth", color: "#52a3da", soft: "#a8cce8", y: 82 },
  { name: "logon", color: "#f75468", soft: "#f8a4b0", y: 103 },
  { name: "request", color: "#e5a82c", soft: "#f0cc80", y: 124 },
];

const ChartPreview = () => (
  <svg
    viewBox="0 0 426 243"
    className="h-[243px] w-full font-['Liberation_Sans',Arial,sans-serif] text-[13px]"
    role="img"
    aria-label="LineChartXL_sum"
  >
    <text x="213" y="30" textAnchor="middle" className="text-[21px] font-bold">
      LineChartXL_sum
    </text>
    <path d="M54.500 60v79" stroke="#000" />
    {["480,0", "400,0", "320,0", "240,0"].map((t, i) => (
      <g key={t}>
        <text x="43" y={64 + i * 26} textAnchor="end">{t}</text>
        <path d={`M50 ${59.5 + i * 26}h10`} stroke="#b0b0b0" />
      </g>
    ))}
    <path d="M61 144.500h253" stroke="#000" />
    <path d="M61.500 138v10M187.500 139v10M313.500 139v10" stroke="#b0b0b0" />
    <path d="M181.500 57.500h11v11h-11z" fill="#f75468" stroke="#000" />
    <path d="M181.500 100.500h11v11h-11z" fill="#52a3da" stroke="#000" />
    <path d="M181.500 125.500h11v11h-11z" fill="#e5a82c" stroke="#000" />
    <text x="351" y="70">Current</text>
    <text x="343" y="155">Reference</text>
    <path d="M330 137.500h82" stroke="#000" />
    {series.map((s) => (
      <g key={s.name}>
        <path d={`M334 ${s.y - 0.5}h22`} stroke={s.color} />
        <path d={`M339.500 ${s.y - 6.5}h11v11h-11z`} fill={s.color} stroke="#000" />
        <text x="361" y={s.y + 4}>{s.name}</text>
        <path d={`M333 ${s.y + 84.5}h22`} stroke={s.soft} />
        <path d={`M344.500 ${s.y + 79.5}l5 5-5 5-5-5z`} fill={s.soft} stroke="#333" />
        <text x="361" y={s.y + 89}>{s.name}</text>
      </g>
    ))}
    <text transform="translate(66 226) rotate(-90)">D</text>
  </svg>
);

const DialogTab = ({ icon, label, active }: { icon: ReactNode; label: string; active?: boolean }) => (
  <button
    type="button"
    role="tab"
    aria-selected={!!active}
    className={clsx(
      "flex h-full items-center gap-[3px] border-r border-[#808080] px-1 pt-0.5 text-[11px] whitespace-nowrap",
      active && "rounded-t-sm border-t bg-white",
    )}
  >
    {icon}
    {label}
  </button>
);

const ActionButton = ({ children, className, disabled }: { children: ReactNode; className: string; disabled?: boolean }) => (
  <button
    type="button"
    disabled={disabled}
    className={clsx("h-6 text-[11px] leading-none", RAISED, className, disabled && "text-[#808080] [text-shadow:1px_1px_0_#fff]")}
  >
    {children}
  </button>
);

const EditChartDialog = () => (
  <div
    role="dialog"
    aria-label="Edit Chart"
    className="absolute bottom-[67px] left-[309px] right-[303px] top-[67px] z-10 flex flex-col border border-b-2 border-r-2 border-b-[#404040] border-l-white border-r-[#404040] border-t-white bg-[#d4d0c8] pb-px pl-[3px] pr-0.5 pt-0.5"
  >
    <div className="flex h-[18px] shrink-0 items-center bg-linear-to-r from-[#808080] to-[#c0c0c0] px-0.5">
      <ChartIcon />
      <span className={clsx("pl-px text-[11px] text-[#d4d0c8]", BOLD)}>Edit Chart</span>
      <button type="button" aria-label="Close dialog" className={clsx("ml-auto grid h-[14px] w-4 place-items-center bg-[#d4d0c8]", RAISED)}>
        <svg width="9" height="8" viewBox="0 0 9 8" aria-hidden="true">
          <path d="M1 .5l7 7M8 .5l-7 7" stroke="#000" strokeWidth="1.500" />
        </svg>
      </button>
    </div>
    <div className="flex h-[60px] shrink-0 border-b border-[#808080] bg-white">
      <div className="flex-1 pl-1 pt-2">
        <h2 className={clsx("text-[13px] leading-4", BOLD)}>Edit Chart</h2>
        <p className="pl-2 pt-1.5 text-[11px] leading-[17px]">
          Select the data to display in the chart and bind it to the series.
        </p>
      </div>
      <svg width="64" height="59" viewBox="0 0 64 59" aria-hidden="true">
        <defs>
          <linearGradient id="glow" x1="0" y1="0" x2="1" y2="1">
            <stop offset="0.2" stopColor="#ffffff" />
            <stop offset="1" stopColor="#d4def4" />
          </linearGradient>
        </defs>
        <path d="M64 4C44 14 30 36 20 59h44z" fill="url(#glow)" />
        <path d="M6.500 16.500h22l8 8v30h-30z" fill="#f6faff" stroke="#a0b0c4" />
        <path d="M28 16.500l9 12c-4-2-7-1-9-2z" fill="#f0b860" stroke="#c89040" strokeWidth=".7" />
        <path d="M10 24h16M10 28h17M10 32h10M23 32h10M10 36h10M23 36h10" stroke="#6a88b0" strokeWidth="1.600" />
        <path d="M10 46h7v6h-7z" fill="#e83a5c" />
        <path d="M19 42h6v10h-6z" fill="#2a80c0" />
        <path d="M27 45h6v7h-6z" fill="#88c070" />
        <path d="M6 55h31" stroke="#3a6478" strokeWidth="1.500" />
      </svg>
    </div>
    <div role="tablist" className="flex h-7 shrink-0 border-b border-t border-b-[#808080] border-t-white">
      <DialogTab icon={<ChartTypeIcon />} label="Select Chart Type" />
      <DialogTab icon={<DataCursorIcon />} label="Select Data" active />
      <DialogTab icon={<FormatChartIcon />} label="Format Chart" />
    </div>

    <div className="flex-1">
      <div className="flex pl-[10px]">
        <div className="flex w-[191px] shrink-0 flex-col pr-1.5 pt-[114px]">
          <span className="h-2 w-[14px] self-end border-l border-t border-[#808080]" />
          <div className="relative mt-[9px]">
            <fieldset className="h-[58px] border border-[#808080] px-0.5 shadow-[1px_1px_0_#fff]">
              <legend className="ml-1 px-0.5 text-[11px] leading-3">Value (Y) Series:*</legend>
              <div className="flex items-center justify-between">
                <Combo id="series" label="Series" value="Series 1" className="w-[158px] bg-white" />
                <button type="button" aria-label="Delete series" className={clsx("grid h-[21px] w-5 place-items-center", RAISED)}>
                  <Icon size={14}>
                    <path d="M3 3l10 10M13 3L3 13" stroke="#808080" strokeWidth="4" />
                  </Icon>
                </button>
              </div>
              <div className="flex items-center pt-0.5">
                <button type="button" aria-label="Aggregation" className="flex w-[46px] items-center gap-2 pl-0.5">
                  <Icon>
                    <path d="M12 5.500V3H4l4 5-4 5h8v-2.500" stroke="#3f3f90" strokeWidth="1.500" />
                  </Icon>
                  <Triangle />
                </button>
                <Field id="y-expr" label="Value expression" value={'if(row["ref"]) (null,)'} className="w-[102px] bg-white" />
                <FxButton className="ml-auto" />
              </div>
            </fieldset>
            <AggregatePopup />
          </div>
        </div>

        <div className="flex-1 pt-[9px]">
          <h3 className={clsx("h-[22px] text-[13px] leading-[19px]", BOLD)}>Chart Preview</h3>
          <div className={clsx("h-[246px] bg-white pl-px pt-px", SUNKEN)}>
            <ChartPreview />
          </div>
        </div>

        <div className="w-[190px] shrink-0 pl-[5px] pt-[126px]">
          <span className="ml-0.5 block h-2 w-[14px] border-r border-t border-[#808080]" />
          <label htmlFor="grouping" className="mt-2 block text-[11px] leading-[14px]">
            <u>O</u>ptional Y Series Grouping:
          </label>
          <div className="flex items-center gap-0.5 pl-2 pt-[3px]">
            <Field id="grouping" value={'if(params["grouping"'} className="w-[104px] bg-white" />
            <FxButton />
            <GroupButton />
          </div>
          <span className="ml-0.5 mt-1.5 block h-2 w-[14px] border-b border-r border-[#808080]" />
        </div>
      </div>

      <div className="flex items-center gap-0.5 pt-2 text-[11px]">
        <label htmlFor="category" className="w-[350px] pr-0.5 text-right">Category (X) Series:*</label>
        <span className="w-0.5" />
        <Field id="category" value={'row["allDate"]'} className="w-[179px] bg-[#a6c3fb]" />
        <FxButton />
        <GroupButton />
        <span className="mb-2 ml-1.5 h-3 w-2 border-b border-r border-[#808080]" />
      </div>

      <div className="flex flex-col gap-[5px] pl-[190px] pt-[38px] text-[11px]">
        <div className="flex items-center">
          <label className="flex w-[157px] items-center gap-[3px] whitespace-nowrap">
            <input type="radio" name="source" className="h-3 w-3" disabled />
            Inherit Data from Container
          </label>
          <Combo id="inherit" label="Container data" value="Inherit Columns and Groups" disabled className="w-[321px] pl-1" />
        </div>
        <div className="flex items-center">
          <label className="flex w-[157px] items-center gap-[3px] whitespace-nowrap">
            <input type="radio" name="source" className="h-3 w-3" defaultChecked />
            Use Data from
          </label>
          <Combo id="dataset" label="Data set" value="all" className="w-[321px] pl-1" />
        </div>
      </div>

      <p className="w-[468px] pt-[26px] text-right text-[11px] leading-4">
        Use the right-click menu or drag the column into series fields.
      </p>
      <label className="flex w-[288px] items-center justify-end gap-1 pt-[3px] text-[11px] leading-4">
        <input type="checkbox" className="h-3 w-3" defaultChecked />
        Show data preview
      </label>

      <div className="flex items-end gap-1.5 pl-[147px] pr-5 pt-[5px]">
        <div className={clsx("flex h-[122px] flex-1 overflow-hidden bg-white p-0.5", SUNKEN)}>
          <table className="h-fit flex-1 border-collapse">
            <tbody>
              {[0, 1, 2, 3, 4, 5, 6, 7].map((r) => (
                <tr key={r} className={clsx("h-[14px] border-b border-[#d4d0c8]", r === 0 && "bg-[#a6c3fb]")}>
                  <td />
                </tr>
              ))}
            </tbody>
          </table>
          <VScroll thumb="h-[69px]" />
        </div>
        <div className="flex w-[117px] shrink-0 flex-col gap-1">
          <ActionButton className="w-full">Fil<u>t</u>ers...</ActionButton>
          <ActionButton className="w-full"><u>P</u>arameters...</ActionButton>
          <ActionButton className="w-full">D<u>a</u>ta Binding...</ActionButton>
        </div>
      </div>
    </div>

    <div className="flex h-12 shrink-0 items-center gap-1 border-t border-[#808080] pl-[13px] pr-[9px] shadow-[inset_0_1px_0_#fff]">
      <button type="button" aria-label="Help" className="mr-auto">
        <Icon size={22}>
          <circle cx="8" cy="8" r="7" fill="#eef2f8" stroke="#5a6a88" />
          <path d="M5.500 6.300c0-3.400 5-3.400 5 0 0 1.700-2.500 1.700-2.500 3.500" stroke="#3a4f78" strokeWidth="1.600" />
          <path d="M7.200 11h1.700v1.500H7.200z" fill="#3a4f78" />
        </Icon>
      </button>
      <ActionButton className="w-[87px]">&lt; <u>B</u>ack</ActionButton>
      <ActionButton className="w-[87px]"><u>N</u>ext &gt;</ActionButton>
      <ActionButton className="w-[87px]"><u>F</u>inish</ActionButton>
      <ActionButton className="w-[87px]">Cancel</ActionButton>
      <ActionButton className="ml-[10px] w-[77px]" disabled>Appl<u>y</u></ActionButton>
    </div>
  </div>
);

/* ---------- taskbar ---------- */

const tasks: { label: string; icon: ReactNode; active?: boolean }[] = [
  {
    label: "Ruben Balk - Inbox - IBM...",
    icon: (
      <Icon>
        <circle cx="8" cy="8" r="7.500" fill="#f0961e" stroke="#b86408" />
        <path d="M4 5h8M4 8h8M5 11h6M6 4v8M10 4v8" stroke="#fbd890" />
      </Icon>
    ),
  },
  {
    label: "C:\\WINDOWS\\system32...",
    icon: (
      <Icon>
        <path d="M.5 2.500h15v11H.5z" fill="#101018" stroke="#3a70b8" />
        <path d="M5 6H3v4h2M7 6v1M7 9v1M9 6l2 4M12 6l1 4" stroke="#fff" />
      </Icon>
    ),
  },
  {
    label: "Java EE - birt/WebConte...",
    icon: (
      <Icon>
        <circle cx="8" cy="8" r="5.500" fill="#fff" stroke="#2fa0b0" strokeWidth="4" />
        <circle cx="8" cy="8" r="1.800" fill="#2fa0b0" />
      </Icon>
    ),
  },
  {
    label: "top - Windows Internet ...",
    icon: (
      <Icon>
        <path d="M13 10.500A5 5 0 1 1 13.500 8H4" stroke="#2a80d8" strokeWidth="2.600" />
        <path d="M1 14C0 10 8 2 15 1.500" stroke="#e8b030" strokeWidth="1.400" />
      </Icon>
    ),
  },
  {
    label: "eclipse",
    icon: (
      <Icon>
        <path d="M1.500 13.500v-10l1-1h4l1.500 2h6.500v9z" fill="#fbe388" stroke="#a88420" />
        <path d="M2 7h12" stroke="#fff6c8" />
      </Icon>
    ),
  },
  { label: "Report Design - repor...", icon: <EclipseIcon />, active: true },
];

const Taskbar = () => (
  <footer className="flex h-[35px] shrink-0 items-center border-t border-[#d4d0c8] px-0.5 pt-0.5 shadow-[inset_0_1px_0_#fff]">
    <button type="button" className={clsx("mr-1 flex h-[22px] w-[52px] items-center gap-0.5 pl-0.5 text-[11px]", RAISED, BOLD)}>
      <Icon>
        <path d="M2 3c2-1 3-1 5 0L6 7.500c-2-1-3-1-5 0z" fill="#e8502c" />
        <path d="M8 3.500c2 1 4 1 6 0L13 8c-2 1-4 1-6 0z" fill="#58a838" />
        <path d="M1 8.500c2-1 3-1 5 0L5 13c-2-1-3-1-5 0z" fill="#2f6cd0" />
        <path d="M7 9c2 1 4 1 6 0l-1 4.500c-2 1-4 1-6 0z" fill="#f0b828" />
      </Icon>
      Start
    </button>
    <div className="flex min-w-0 flex-1 gap-[3px]">
      {tasks.map((t) => (
        <button
          key={t.label}
          type="button"
          className={clsx(
            "flex h-[22px] min-w-0 max-w-[160px] flex-1 items-center gap-1 pl-1 text-[11px] whitespace-nowrap",
            t.active ? clsx(SUNKEN, CHECKER, BOLD) : RAISED,
          )}
        >
          {t.icon}
          {t.label}
        </button>
      ))}
    </div>
    <span className="grid h-4 w-4 place-items-center bg-[#0a246a] text-[11px] text-white">NL</span>
    <span className="ml-1 h-6 w-0.5 border-l border-r border-l-[#808080] border-r-white" />
    <Icon className="ml-0.5">
      <path d="M10.500 2v3M8.500 6.500h4v8h-4zM8.500 9.500h4" fill="#fff" stroke="#404040" />
    </Icon>
    <div className="ml-0.5 flex h-[22px] w-[76px] items-center gap-1 border border-b-white border-l-[#808080] border-r-white border-t-[#808080] pl-[3px] text-[11px]">
      <button type="button" aria-label="Show hidden icons" className="pb-0.5 text-[14px] font-bold">«</button>
      <Icon>
        <path d="M0 0h16v16H0z" fill="#28a048" />
        <path d="M0 0h16L0 12z" fill="#e0e828" />
        <path d="M0 5h16M0 9h16M0 13h16" stroke="#127a60" />
      </Icon>
      <time className="pl-1">13:37</time>
    </div>
  </footer>
);

const Scribble = () => (
  <svg className="pointer-events-none absolute inset-0 z-30 h-full w-full" fill="none" aria-hidden="true">
    <path
      d="M369 347L357 343L343 340L340 337L323 335Q312 338 307 350Q301 364 303 378Q308 392 323 405L337 408Q352 415 367 433V507Q371 513 380 518L400 521L443 527H515L527 525Q545 515 555 503Q570 487 575 480Q586 455 589 423V403Q585 392 573 377L560 366L543 357L513 350H450L433 353L420 361L400 366H380L367 359"
      stroke="#ec0c0c"
      strokeWidth="4"
      strokeLinecap="round"
      strokeLinejoin="round"
    />
  </svg>
);

export default function App() {
  return (
    <div className="relative flex h-screen flex-col overflow-hidden bg-[#d4d0c8] font-['Roboto','Liberation_Sans',sans-serif] text-black">
      <TitleBar />
      <MenuBar />
      <div className="flex h-8 shrink-0">
        <MainToolbar />
        <Perspectives />
      </div>
      <main className="flex min-h-0 flex-1 gap-1 px-1 pl-[5px]">
        <div className="flex w-[265px] shrink-0 flex-col">
          <PaletteView />
          <NavigatorView />
        </div>
        <div className="flex min-w-0 flex-1 flex-col">
          <Editor />
          <Problems />
        </div>
      </main>
      <div className="flex h-[25px] shrink-0 items-center">
        <span className="-ml-0.5 flex">
          <Separator />
        </span>
        <button type="button" aria-label="Show view as a fast view" className="ml-1">
          <Icon>
            <path d="M1.500 3.500h5v10h-5z" fill="#fff" stroke="#5a8ab0" />
            <path d="M1 3h6v2.500H1z" fill="#2a78a8" />
            <path d="M11.500 1v6M8.500 4h6" stroke="#c89020" strokeWidth="1.300" />
          </Icon>
        </button>
        <span className="ml-auto mr-[249px] h-[18px] w-0.5 border-l border-r border-l-[#808080] border-r-white" />
      </div>
      <Taskbar />
      <EditChartDialog />
      <Scribble />
    </div>
  );
}
